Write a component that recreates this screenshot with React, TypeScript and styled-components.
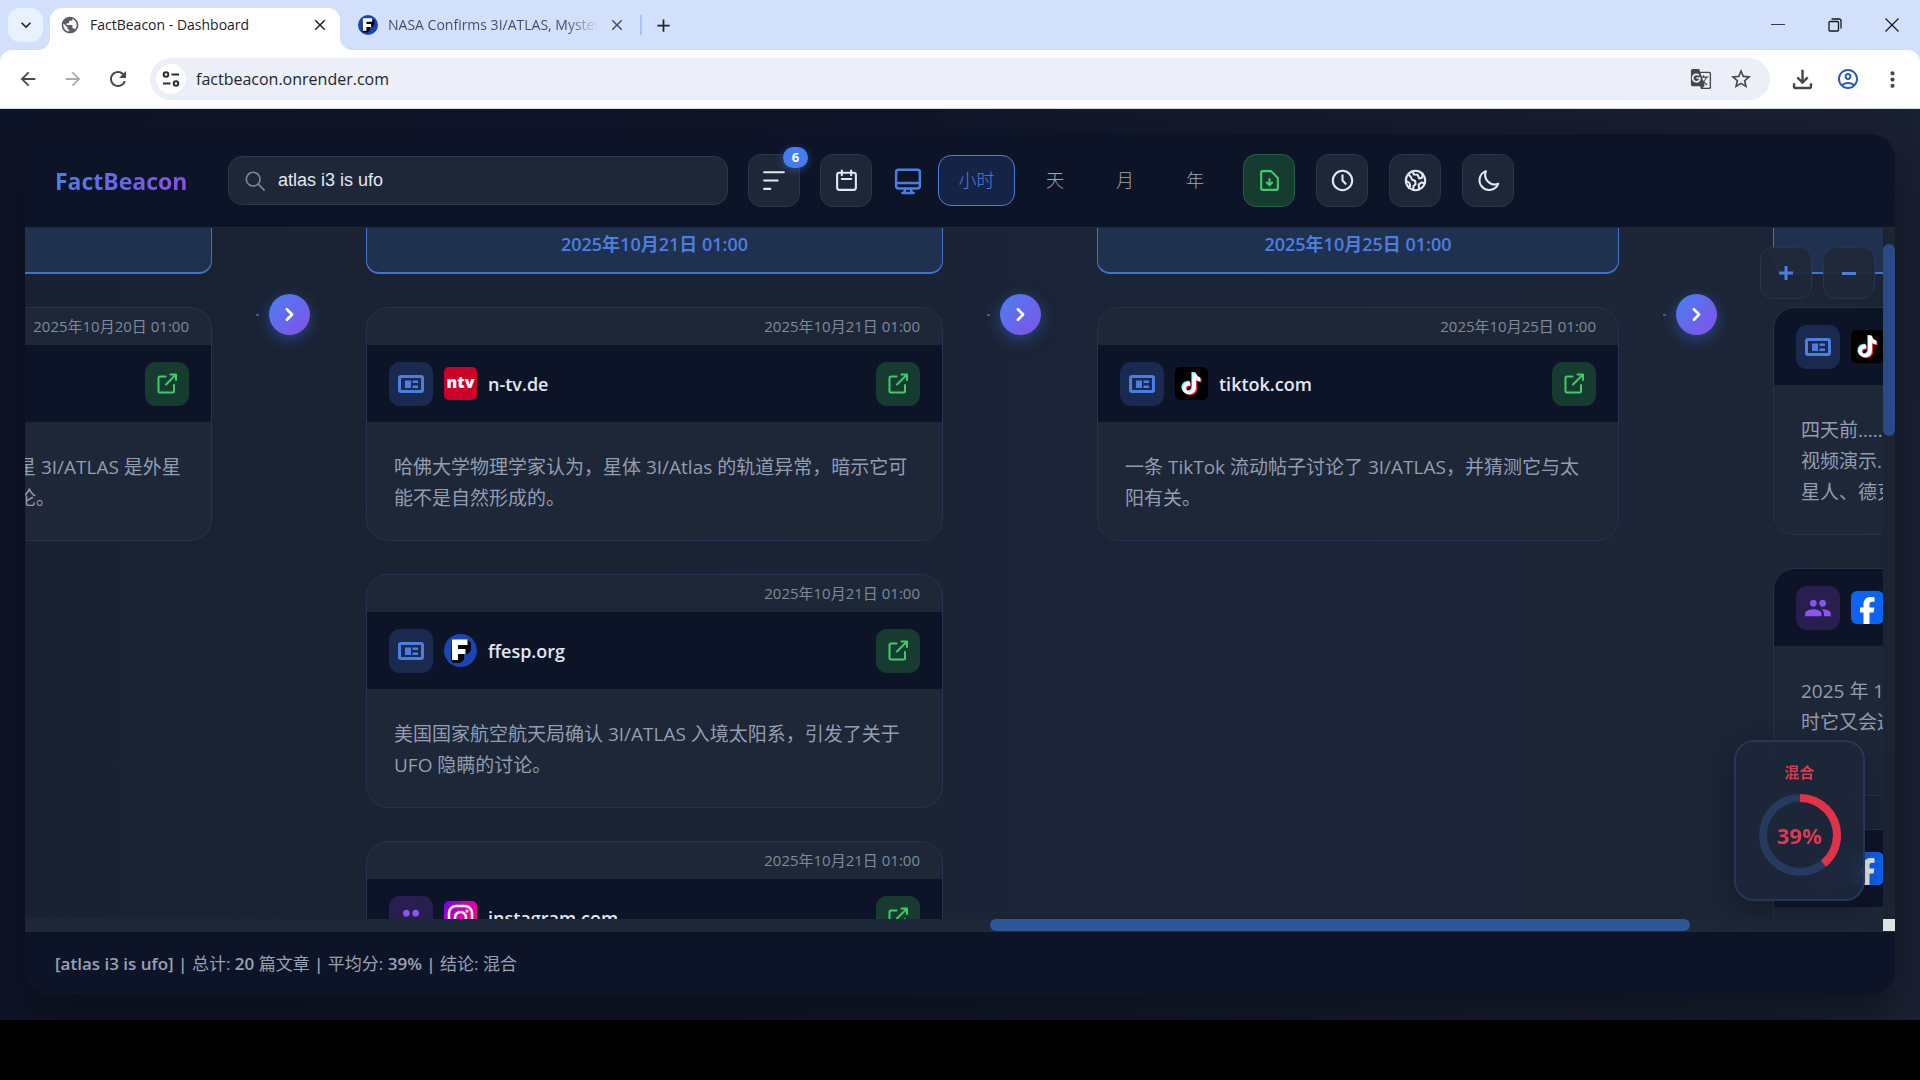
import React from "react";
import styled, { createGlobalStyle, css } from "styled-components";
import {
  MdArrowBack,
  MdArrowForward,
  MdRefresh,
  MdGTranslate,
  MdStarBorder,
  MdOutlineFileDownload,
  MdOutlineAccountCircle,
  MdMoreVert,
  MdPublic,
  MdPeople,
  MdClose,
  MdAdd,
  MdKeyboardArrowDown,
} from "react-icons/md";

const uiFont = `"Open Sans", "Noto Sans", "Noto Sans CJK SC", sans-serif`;

const color = {
  ink: "#0e1428",
  panel: "#1e2738",
  line: "#22344f",
  blue: "#4a7fe0",
  violet: "#8450e0",
  green: "#3fce66",
  red: "#dc3a4e",
  text: "#e2e7f2",
  muted: "#939db1",
};

const GlobalStyle = createGlobalStyle`
  *, *::before, *::after { box-sizing: border-box; }
  html, body { margin: 0; background: #000; }
  body { font-family: ${uiFont}; overflow: hidden; }
  button, input { font: inherit; color: inherit; }
  button { padding: 0; border: 0; background: none; cursor: pointer; }
  svg { display: block; flex: none; }
`;

const Screen = styled.div`
  height: 100vh;
  display: flex;
  flex-direction: column;
`;

/* ---------- browser window ---------- */

const TabStrip = styled.div`
  flex: none;
  height: 50px;
  display: flex;
  align-items: flex-end;
  background: #d3e0fb;
  color: #1f2328;
`;

const TabSearch = styled.button`
  width: 35px;
  height: 34px;
  margin: 0 7px 8px 8px;
  border-radius: 12px;
  background: #e9f0fe;
  display: grid;
  place-items: center;
`;

const Tab = styled.div<{ $active?: boolean }>`
  position: relative;
  display: flex;
  align-items: center;
  gap: 10px;
  width: ${(p) => (p.$active ? 290 : 300)}px;
  height: 42px;
  padding: 0 11px 8px 10px;
  border-radius: 12px 12px 0 0;
  ${(p) =>
    p.$active
      ? css`
          background: #fff;
          &::before,
          &::after {
            content: "";
            position: absolute;
            bottom: 0;
            width: 12px;
            height: 12px;
          }
          &::before {
            left: -12px;
            background: radial-gradient(circle at 0 0, transparent 12px, #fff 12px);
          }
          &::after {
            right: -12px;
            background: radial-gradient(circle at 100% 0, transparent 12px, #fff 12px);
          }
        `
      : css`
          padding: 0 14px 8px 18px;
          color: #44506b;
        `}
`;

const TabTitle = styled.span<{ $fade?: boolean }>`
  flex: 1;
  font-size: 14px;
  line-height: 20px;
  white-space: nowrap;
  overflow: hidden;
  ${(p) => p.$fade && "mask-image: linear-gradient(90deg, #000 85%, transparent);"}
`;

const StripDivider = styled.span`
  width: 2px;
  height: 20px;
  margin: 0 9px 15px 0;
  background: #a9c4f5;
`;

const StripButton = styled.button`
  width: 24px;
  height: 34px;
  margin-bottom: 8px;
  display: grid;
  place-items: center;
`;

const WindowControls = styled.div`
  margin-left: auto;
  display: flex;
  height: 50px;
`;

const WindowButton = styled.button`
  width: 57px;
  display: grid;
  place-items: center;
`;

const AddressBar = styled.div`
  flex: none;
  height: 59px;
  display: flex;
  align-items: center;
  background: linear-gradient(#d3e0fb, #d3e0fb) top / 100% 12px no-repeat #fff;
  color: #44474c;
`;

const AddressInner = styled.div`
  flex: 1;
  height: 59px;
  display: flex;
  align-items: center;
  padding: 0 5px;
  border-bottom: 1px solid #d7dbe2;
  border-radius: 12px 12px 0 0;
  background: #fff;
`;

const NavButton = styled.button<{ $dim?: boolean }>`
  width: 45px;
  height: 40px;
  display: grid;
  place-items: center;
  opacity: ${(p) => (p.$dim ? 0.45 : 1)};
`;

const Omnibox = styled.div`
  flex: 1;
  height: 42px;
  margin: 0 10px;
  padding: 0 9px 0 6px;
  display: flex;
  align-items: center;
  gap: 10px;
  border-radius: 21px;
  background: #eceff8;
`;

const SiteChip = styled.button`
  width: 30px;
  height: 30px;
  border-radius: 50%;
  background: #fff;
  display: grid;
  place-items: center;
`;

const UrlInput = styled.input`
  flex: 1;
  border: 0;
  padding: 0;
  outline: 0;
  background: none;
  color: #22262c;
  font-size: 16px;
`;

const OmniActions = styled.div`
  display: flex;
`;

const OmniButton = styled(NavButton)`
  width: 40px;
`;

/* ---------- page ---------- */

const Page = styled.main`
  flex: 1;
  min-height: 0;
  padding: 25px;
  display: flex;
  background: linear-gradient(100deg, #0f1528 0%, #10162a 40%, #1b2233 100%);
`;

const Shell = styled.div`
  flex: 1;
  min-width: 0;
  display: flex;
  flex-direction: column;
  overflow: hidden;
  border-radius: 25px;
  background: ${color.ink};
  box-shadow: 0 25px 50px rgba(8, 12, 20, 0.6);
`;

const Header = styled.header`
  flex: none;
  height: 94px;
  padding: 0 30px;
  display: flex;
  align-items: center;
  border-bottom: 1px solid #1b2a46;
  color: ${color.text};
`;

const Brand = styled.h1`
  flex: none;
  width: 173px;
  margin: 0;
  font-size: 23px;
  line-height: 32px;
  font-weight: 700;
  background: linear-gradient(90deg, #4a7fe8, #8a4fe0 133px);
  background-clip: text;
  color: transparent;
`;

const SearchBox = styled.label`
  width: 500px;
  height: 49px;
  padding: 0 15px;
  display: flex;
  align-items: center;
  gap: 12px;
  border: 1px solid #2a3850;
  border-radius: 14px;
  background: ${color.panel};
  color: #7d8798;
`;

const SearchInput = styled.input`
  flex: 1;
  border: 0;
  padding: 0;
  outline: 0;
  background: none;
  color: ${color.text};
  font: 18px "Liberation Sans", Arial, sans-serif;
`;

const ToolGroup = styled.div<{ $gap: number; $start: number }>`
  display: flex;
  align-items: center;
  gap: ${(p) => p.$gap}px;
  margin-left: ${(p) => p.$start}px;
`;

const ToolButton = styled.button<{ $green?: boolean }>`
  position: relative;
  width: 52px;
  height: 53px;
  display: grid;
  place-items: center;
  border: 1px solid ${(p) => (p.$green ? "#25603f" : "#26364f")};
  border-radius: 13px;
  background: ${(p) => (p.$green ? "#163c31" : color.panel)};
  color: ${(p) => (p.$green ? color.green : color.text)};
`;

const Badge = styled.span`
  position: absolute;
  top: -8px;
  right: -9px;
  min-width: 25px;
  height: 21px;
  border-radius: 11px;
  background: #437df0;
  color: #fff;
  font-size: 13px;
  line-height: 21px;
  font-weight: 700;
  text-align: center;
  box-shadow: 0 2px 8px rgba(67, 125, 240, 0.4);
`;

const RangeIcon = styled.span`
  color: ${color.blue};
`;

const RangeButton = styled.button<{ $active?: boolean }>`
  height: 51px;
  width: ${(p) => (p.$active ? 77 : 60)}px;
  border: 1px solid ${(p) => (p.$active ? color.blue : "transparent")};
  border-radius: 13px;
  background: ${(p) => (p.$active ? "#152347" : "transparent")};
  color: ${(p) => (p.$active ? color.blue : "#a0a8b8")};
  font-size: 18px;
  line-height: 24px;
  font-weight: 300;
  padding-bottom: 2px;
`;

const Canvas = styled.section`
  position: relative;
  flex: 1;
  min-height: 0;
  display: grid;
  grid-template: minmax(0, 1fr) 12px / minmax(0, 1fr) 12px;
  background: linear-gradient(90deg, #1a2132, #1b2436 50%, #1d2638 80%, #1c2434);
`;

const Viewport = styled.div`
  overflow: hidden;
`;

const Track = styled.div`
  display: flex;
  align-items: flex-start;
  margin-left: -36px;
`;

const VerticalBar = styled.div`
  display: grid;
  grid-template-rows: 16fr 192fr 483fr;
`;

const HorizontalBar = styled.div`
  display: grid;
  grid-template-columns: 965fr 700fr 193fr;
  background: #1e2738;
`;

const Thumb = styled.div<{ $vertical?: boolean }>`
  ${(p) => (p.$vertical ? "grid-row: 2;" : "grid-column: 2;")}
  border-radius: 6px;
  background: ${(p) => (p.$vertical ? "#2a4a86" : "#2f5696")};
`;

const Corner = styled.div`
  background: #dfe2e5;
`;

const Column = styled.div<{ $width: number }>`
  flex: none;
  width: ${(p) => p.$width}px;
`;

const ColumnHeader = styled.h2`
  height: 46px;
  margin: 0 0 33px;
  border: solid #4373c9;
  border-width: 0 1px 2px;
  border-radius: 0 0 13px 13px;
  background: #20304f;
  color: ${color.blue};
  font-size: 18px;
  line-height: 32px;
  font-weight: 600;
  text-align: center;
`;

const CardList = styled.div`
  display: flex;
  flex-direction: column;
  gap: 33px;
`;

const Card = styled.article`
  overflow: hidden;
  border: 1px solid ${color.line};
  border-radius: 22px;
  background: ${color.panel};
`;

const CardDate = styled.time`
  display: block;
  padding: 0 22px;
  height: 37px;
  font-size: 15px;
  line-height: 37px;
  text-align: right;
  color: #7f899a;
  white-space: nowrap;
`;

const CardHead = styled.div`
  display: flex;
  align-items: center;
  height: 77px;
  padding: 0 22px;
  gap: 11px;
  background: ${color.ink};
`;

const KindIcon = styled.span<{ $people?: boolean }>`
  flex: none;
  width: 44px;
  height: 44px;
  display: grid;
  place-items: center;
  border-radius: 11px;
  background: ${(p) => (p.$people ? "#281f50" : "#1a2950")};
  color: ${(p) => (p.$people ? "#8a55ea" : color.blue)};
`;

const Site = styled.strong`
  color: ${color.text};
  font-size: 18px;
  line-height: 28px;
  font-weight: 600;
`;

const OpenLink = styled.a`
  flex: none;
  width: 44px;
  height: 44px;
  margin-left: auto;
  display: grid;
  place-items: center;
  border-radius: 11px;
  background: #173a31;
  color: ${color.green};
`;

const CardText = styled.p<{ $lines: number }>`
  margin: 0;
  padding: 30px 27px 26px;
  min-height: ${(p) => p.$lines * 31 + 56}px;
  font-size: 19px;
  line-height: 31px;
  color: ${color.muted};
  white-space: pre;
`;

const Connector = styled.div`
  flex: none;
  width: 154px;
  padding-top: 66px;
  display: flex;
  justify-content: center;
`;

const NextButton = styled.button`
  position: relative;
  width: 41px;
  height: 41px;
  display: grid;
  place-items: center;
  border-radius: 50%;
  background: linear-gradient(135deg, #4781f0, #8350e8);
  color: #fff;
  box-shadow: 0 4px 15px rgba(67, 115, 230, 0.45);
  &::before {
    content: "";
    position: absolute;
    left: -13px;
    top: 20px;
    width: 3px;
    height: 2px;
    background: #46568a;
  }
`;

const ZoomControls = styled.div`
  position: absolute;
  top: 19px;
  right: 20px;
  display: flex;
  gap: 11px;
`;

const ZoomButton = styled.button`
  width: 52px;
  height: 52px;
  display: grid;
  place-items: center;
  border: 1px solid #26364f;
  border-radius: 13px;
  background: rgba(30, 39, 56, 0.94);
  color: ${color.blue};
`;

const ScoreCard = styled.aside`
  position: absolute;
  right: 30px;
  bottom: 30px;
  width: 131px;
  height: 161px;
  padding-top: 20px;
  display: flex;
  flex-direction: column;
  align-items: center;
  gap: 12px;
  border: 2px solid #243756;
  border-radius: 20px;
  background: rgba(29, 39, 57, 0.88);
  backdrop-filter: blur(18px);
  box-shadow: 0 8px 30px rgba(10, 15, 28, 0.45);
  color: ${color.red};
  font-weight: 700;
`;

const ScoreLabel = styled.span`
  font-size: 15px;
  line-height: 20px;
`;

const Gauge = styled.div`
  display: grid;
  place-items: center;
  & > * {
    grid-area: 1 / 1;
  }
`;

const GaugeValue = styled.span`
  font-size: 22px;
  line-height: 30px;
`;

const Footer = styled.footer`
  flex: none;
  height: 64px;
  padding: 0 30px;
  border-top: 1px solid #1c2b45;
  color: #98a2b5;
  font-size: 17px;
  line-height: 64px;
  b {
    font-weight: 600;
  }
`;

const LowerBand = styled.div`
  flex: none;
  height: 60px;
  background: #000;
`;

/* ---------- drawings ---------- */

type IconProps = { size?: number; children: React.ReactNode; width?: number };

const Line = ({ size = 25, width = 2, children }: IconProps) => (
  <svg
    width={size}
    height={size}
    viewBox="0 0 24 24"
    fill="none"
    stroke="currentColor"
    strokeWidth={width}
    strokeLinecap="round"
    strokeLinejoin="round"
    aria-hidden="true"
  >
    {children}
  </svg>
);

const FilterIcon = () => (
  <Line>
    <path d="M2 4h19M2 12h13M2 20h6" />
  </Line>
);
const CalendarIcon = () => (
  <Line>
    <rect x="3" y="4.5" width="18" height="16.5" rx="2" />
    <path d="M7.5 2.5v4.500M16.500 2.500v4.500M7.500 10.500h9" />
  </Line>
);
const MonitorIcon = () => (
  <Line size={30}>
    <rect x="2.500" y="3" width="19" height="15" rx="2" />
    <path d="M2.500 13.500h19M10 18l-1 3M14 18l1 3M7.500 21.500h9" />
  </Line>
);
const FileIcon = () => (
  <Line>
    <path d="M5 3h8.500L20 9.500V20a1 1 0 0 1-1 1H5a1 1 0 0 1-1-1V4a1 1 0 0 1 1-1z" />
    <path d="M12 10.500V16M9.500 14l2.500 2.500 2.500-2.500" />
  </Line>
);
const ClockIcon = () => (
  <Line>
    <circle cx="12" cy="12" r="9.300" />
    <path d="M12 7v5l3 3.200" />
  </Line>
);
const EarthIcon = () => (
  <Line>
    <circle cx="12" cy="12" r="9.300" />
    <path d="M5 6.200l2.500 2.300 1 2.500 3.200 1.500.3 3-2 2v3.500M3 12.500l3 1.500 1 3-1.500 2M9 3.200l1.500 3 3.500.3 1.500 3.500 2.500-.5 1-4M20.800 14.500l-3.300-.5-2.500 2 .5 4.500" />
  </Line>
);
const MoonIcon = () => (
  <Line>
    <path d="M9.500 3a9.300 9.300 0 1 0 11.800 12.200A9.300 9.300 0 0 1 9.500 3z" />
  </Line>
);
const SearchIcon = () => (
  <Line size={22} width={1.8}>
    <circle cx="10" cy="10" r="7.500" />
    <path d="M15.500 15.500L22 22" />
  </Line>
);
const ExternalIcon = () => (
  <Line size={24}>
    <path d="M10.500 4.500H5A1.500 1.500 0 0 0 3.500 6v13A1.500 1.500 0 0 0 5 20.500h12.500A1.500 1.500 0 0 0 19 19v-6" />
    <path d="M11 12.500L20.500 3M15.500 2.500H21V8" />
  </Line>
);
const NewsIcon = () => (
  <svg width="26" height="18" viewBox="0 0 26 18" fill="currentColor" aria-hidden="true">
    <rect x="1.500" y="1.500" width="23" height="15" rx="1.500" fill="none" stroke="currentColor" strokeWidth="3" />
    <path d="M7 5.500h6v7.500H7zM14.500 5.500H20v2.500h-5.500zM14.500 10.500H20V13h-5.500z" />
  </svg>
);

const NtvLogo = styled.span`
  flex: none;
  width: 33px;
  height: 33px;
  border-radius: 5px;
  background: #cc0029;
  color: #fff;
  font: 800 16px/31px "Open Sans", sans-serif;
  text-align: center;
`;

const FLogo = ({ size = 33 }: { size?: number }) => (
  <svg width={size} height={size} viewBox="0 0 33 33" aria-hidden="true">
    <circle cx="16.500" cy="16.500" r="16.500" fill="#1b46b0" />
    <path d="M8 6h16l3 3v7l-3 4h-4v6l-4 3H9l-2-3z" fill="#05070d" />
    <path d="M8 5.500h15.500v5.500H14v4h7.500v5H14v6H8z" fill="#fff" />
  </svg>
);

const note =
  "M17.800 6h3.700c.3 2.700 1.900 4.400 4.500 4.700v3.800c-1.700 0-3.200-.5-4.400-1.300v7.600c0 8-10.800 8.600-13.200 3-2-5.200 2.200-9.800 7.200-9v4c-2.500-.7-4.200.8-4 2.900.3 3.600 6.200 3.300 6.200-1.500z";
const TikTokLogo = () => (
  <svg width="33" height="33" viewBox="0 0 33 33" aria-hidden="true">
    <rect width="33" height="33" rx="5" fill="#000" />
    <path d={note} fill="#25f4ee" transform="translate(-1.500 -1)" />
    <path d={note} fill="#fe2c55" transform="translate(.5 .8)" />
    <path d={note} fill="#fff" transform="translate(-.6 -.2)" />
  </svg>
);
const InstagramLogo = () => (
  <svg width="33" height="33" viewBox="0 0 33 33" aria-hidden="true">
    <defs>
      <linearGradient id="ig" x1="0" y1="0" x2="1" y2="1">
        <stop offset="0" stopColor="#6a00ff" />
        <stop offset=".4" stopColor="#d300b5" />
        <stop offset="1" stopColor="#ff0a6c" />
      </linearGradient>
    </defs>
    <rect width="33" height="33" rx="5" fill="url(#ig)" />
    <g fill="none" stroke="#fff" strokeWidth="2.500">
      <rect x="5" y="5" width="23" height="23" rx="7" />
      <circle cx="16.500" cy="16.500" r="5.500" />
    </g>
    <circle cx="23" cy="10" r="1.600" fill="#fff" />
  </svg>
);
const FacebookLogo = () => (
  <svg width="33" height="33" viewBox="0 0 33 33" aria-hidden="true">
    <rect width="33" height="33" rx="6" fill="#0e64f2" />
    <path
      d="M12.500 33V21.500H9V16.500h3.500V13.500c0-5 2.800-7.500 7.300-7.500 1.800 0 3.700.3 3.700.3v4.500h-2.500c-2 0-2.500 1-2.500 2.500v3.200h5l-1 5h-4V33z"
      fill="#fff"
    />
  </svg>
);

/* ---------- data ---------- */

type Logo = "ntv" | "ffesp" | "tiktok" | "instagram" | "facebook";
type Article = {
  date?: string;
  kind?: "news" | "people";
  logo?: Logo;
  site?: string;
  text: string[];
  lines?: number;
  link?: boolean;
};
type Group = { title: string; width: number; articles: Article[] };

const groups: Group[] = [
  {
    title: "",
    width: 223,
    articles: [{ date: "2025年10月20日 01:00", link: true, text: ["星 3I/ATLAS 是外星", "论。"] }],
  },
  {
    title: "2025年10月21日 01:00",
    width: 577,
    articles: [
      {
        date: "2025年10月21日 01:00",
        kind: "news",
        logo: "ntv",
        site: "n-tv.de",
        link: true,
        text: ["哈佛大学物理学家认为，星体 3I/Atlas 的轨道异常，暗示它可", "能不是自然形成的。"],
      },
      {
        date: "2025年10月21日 01:00",
        kind: "news",
        logo: "ffesp",
        site: "ffesp.org",
        link: true,
        text: ["美国国家航空航天局确认 3I/ATLAS 入境太阳系，引发了关于", "UFO 隐瞒的讨论。"],
      },
      {
        date: "2025年10月21日 01:00",
        kind: "people",
        logo: "instagram",
        site: "instagram.com",
        link: true,
        text: [],
      },
    ],
  },
  {
    title: "2025年10月25日 01:00",
    width: 522,
    articles: [
      {
        date: "2025年10月25日 01:00",
        kind: "news",
        logo: "tiktok",
        site: "tiktok.com",
        link: true,
        text: ["一条 TikTok 流动帖子讨论了 3I/ATLAS，并猜测它与太", "阳有关。"],
      },
    ],
  },
  {
    title: "",
    width: 522,
    articles: [
      { kind: "news", logo: "tiktok", lines: 3, text: ["四天前……", "视频演示...", "星人、德克"] },
      { kind: "people", logo: "facebook", lines: 3, text: ["2025 年 1", "时它又会这"] },
      { kind: "people", logo: "facebook", lines: 3, text: [] },
    ],
  },
];

const logos: Record<Logo, React.ReactNode> = {
  ntv: <NtvLogo>ntv</NtvLogo>,
  ffesp: <FLogo />,
  tiktok: <TikTokLogo />,
  instagram: <InstagramLogo />,
  facebook: <FacebookLogo />,
};

const ArticleCard = ({ article }: { article: Article }) => (
  <Card>
    {article.date && <CardDate>{article.date}</CardDate>}
    <CardHead>
      {article.kind && (
        <KindIcon $people={article.kind === "people"}>
          {article.kind === "people" ? <MdPeople size={28} /> : <NewsIcon />}
        </KindIcon>
      )}
      {article.logo && logos[article.logo]}
      {article.site && <Site>{article.site}</Site>}
      {article.link && (
        <OpenLink href="#" aria-label="打开文章">
          <ExternalIcon />
        </OpenLink>
      )}
    </CardHead>
    <CardText $lines={article.lines ?? 2}>{article.text.join("\n")}</CardText>
  </Card>
);

const circumference = 2 * Math.PI * 37;

export default function App() {
  return (
    <Screen>
      <GlobalStyle />
      <TabStrip>
        <TabSearch aria-label="Search tabs">
          <MdKeyboardArrowDown size={20} />
        </TabSearch>
        <Tab $active>
          <MdPublic size={20} color="#5a5e64" />
          <TabTitle>FactBeacon - Dashboard</TabTitle>
          <MdClose size={18} />
        </Tab>
        <Tab>
          <FLogo size={20} />
          <TabTitle $fade>NASA Confirms 3I/ATLAS, Mystery</TabTitle>
          <MdClose size={18} />
        </Tab>
        <StripDivider />
        <StripButton aria-label="New tab">
          <MdAdd size={21} />
        </StripButton>
        <WindowControls>
          <WindowButton aria-label="Minimize">
            <svg width="14" height="14" viewBox="0 0 14 14" stroke="#333a48">
              <path d="M0 6.500h14" />
            </svg>
          </WindowButton>
          <WindowButton aria-label="Restore">
            <svg width="14" height="14" viewBox="0 0 14 14" fill="none" stroke="#15181d" strokeWidth="1.300">
              <rect x="1" y="3.500" width="9.500" height="9.500" rx="1" />
              <path d="M3.500 1h7.500a2 2 0 0 1 2 2v7.500" />
            </svg>
          </WindowButton>
          <WindowButton aria-label="Close">
            <svg width="14" height="14" viewBox="0 0 14 14" stroke="#15181d" strokeWidth="1.200">
              <path d="M.5.5l13 13M13.500.5l-13 13" />
            </svg>
          </WindowButton>
        </WindowControls>
      </TabStrip>
      <AddressBar>
        <AddressInner>
          <NavButton aria-label="Back">
            <MdArrowBack size={22} />
          </NavButton>
          <NavButton aria-label="Forward" $dim>
            <MdArrowForward size={22} />
          </NavButton>
          <NavButton aria-label="Reload">
            <MdRefresh size={24} />
          </NavButton>
          <Omnibox>
            <SiteChip aria-label="Site information">
              <svg width="18" height="18" viewBox="0 0 18 18" fill="none" stroke="#2b2e33" strokeWidth="2">
                <circle cx="4" cy="4.500" r="2.300" />
                <path d="M9.500 4.500H17M1 13.500h7.500" />
                <circle cx="14" cy="13.500" r="2.300" />
              </svg>
            </SiteChip>
            <UrlInput aria-label="Address" defaultValue="factbeacon.onrender.com" />
            <OmniActions>
              <OmniButton aria-label="Translate">
                <MdGTranslate size={22} />
              </OmniButton>
              <OmniButton aria-label="Bookmark">
                <MdStarBorder size={24} />
              </OmniButton>
            </OmniActions>
          </Omnibox>
          <NavButton aria-label="Downloads">
            <MdOutlineFileDownload size={29} />
          </NavButton>
          <NavButton aria-label="Profile">
            <MdOutlineAccountCircle size={24} color="#2559bd" />
          </NavButton>
          <NavButton aria-label="Menu">
            <MdMoreVert size={25} />
          </NavButton>
        </AddressInner>
      </AddressBar>

      <Page>
        <Shell>
          <Header>
            <Brand>FactBeacon</Brand>
            <SearchBox>
              <SearchIcon />
              <SearchInput aria-label="搜索" defaultValue="atlas i3 is ufo" />
            </SearchBox>
            <ToolGroup $gap={20} $start={20}>
              <ToolButton aria-label="筛选">
                <FilterIcon />
                <Badge>6</Badge>
              </ToolButton>
              <ToolButton aria-label="日期">
                <CalendarIcon />
              </ToolButton>
            </ToolGroup>
            <ToolGroup $gap={15} $start={21}>
              <RangeIcon>
                <MonitorIcon />
              </RangeIcon>
              <ToolGroup $gap={10} $start={0}>
                <RangeButton $active>小时</RangeButton>
                <RangeButton>天</RangeButton>
                <RangeButton>月</RangeButton>
                <RangeButton>年</RangeButton>
              </ToolGroup>
            </ToolGroup>
            <ToolGroup $gap={21} $start={18}>
              <ToolButton $green aria-label="导出">
                <FileIcon />
              </ToolButton>
              <ToolButton aria-label="历史">
                <ClockIcon />
              </ToolButton>
              <ToolButton aria-label="语言">
                <EarthIcon />
              </ToolButton>
              <ToolButton aria-label="主题">
                <MoonIcon />
              </ToolButton>
            </ToolGroup>
          </Header>

          <Canvas>
            <Viewport>
              <Track>
                {groups.map((group, i) => (
                  <React.Fragment key={i}>
                    {i > 0 && (
                      <Connector>
                        <NextButton aria-label="下一组">
                          <Line size={25} width={2.5}>
                            <path d="M9.500 7L14.500 12l-5 5" />
                          </Line>
                        </NextButton>
                      </Connector>
                    )}
                    <Column $width={group.width}>
                      <ColumnHeader>{group.title}</ColumnHeader>
                      <CardList>
                        {group.articles.map((a, j) => (
                          <ArticleCard key={j} article={a} />
                        ))}
                      </CardList>
                    </Column>
                  </React.Fragment>
                ))}
              </Track>
            </Viewport>
            <VerticalBar>
              <Thumb $vertical />
            </VerticalBar>
            <HorizontalBar>
              <Thumb />
            </HorizontalBar>
            <Corner />
            <ZoomControls>
              <ZoomButton aria-label="放大">
                <svg width="14" height="14" viewBox="0 0 14 14" stroke="currentColor" strokeWidth="3">
                  <path d="M7 0v14M0 7h14" />
                </svg>
              </ZoomButton>
              <ZoomButton aria-label="缩小">
                <svg width="14" height="14" viewBox="0 0 14 14" stroke="currentColor" strokeWidth="3">
                  <path d="M0 7.500h14" />
                </svg>
              </ZoomButton>
            </ZoomControls>
            <ScoreCard>
              <ScoreLabel>混合</ScoreLabel>
              <Gauge>
                <svg width="82" height="82" viewBox="0 0 82 82" fill="none" strokeWidth="8">
                  <circle cx="41" cy="41" r="37" stroke="#26395f" />
                  <circle
                    cx="41"
                    cy="41"
                    r="37"
                    stroke="#e23247"
                    strokeDasharray={`${circumference * 0.39} ${circumference}`}
                    transform="rotate(-90 41 41)"
                  />
                </svg>
                <GaugeValue>39%</GaugeValue>
              </Gauge>
            </ScoreCard>
          </Canvas>

          <Footer>
            <b>[atlas i3 is ufo] |</b> 总计: <b>20</b> 篇文章 <b>|</b> 平均分: <b>39% |</b> 结论: 混合
          </Footer>
        </Shell>
      </Page>
      <LowerBand />
    </Screen>
  );
}
